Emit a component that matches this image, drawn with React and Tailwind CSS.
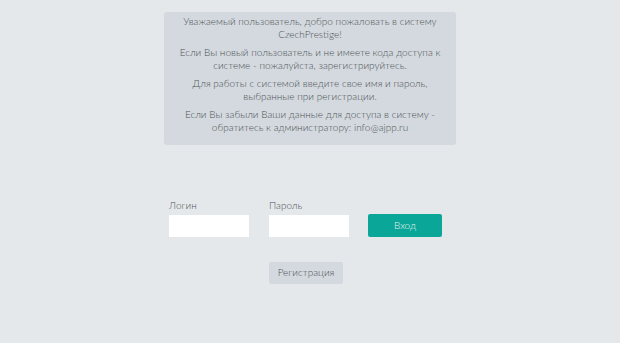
import React from 'react';

const App = () => {
  return (
    <div className="min-h-[343px] w-full bg-[#e4e8eb] pt-3" style={{ fontFamily: 'Lato, "Open Sans", sans-serif' }}>
      <div className="mx-auto w-[292px] rounded-[3px] bg-[#d3d9de] px-3 pt-[3px] pb-[6px] text-center text-[10px] font-light leading-[13px] text-[#4f5458]">
        <p className="mb-[5px]">Уважаемый пользователь, добро пожаловать в систему CzechPrestige!</p>
        <p className="mb-[5px]">Если Вы новый пользователь и не имеете кода доступа к системе - пожалуйста, зарегистрируйтесь.</p>
        <p className="mb-[5px]">Для работы с системой введите свое имя и пароль, выбранные при регистрации.</p>
        <p className="mb-[5px]">Если Вы забыли Ваши данные для доступа в систему - обратитесь к администратору: info@ajpp.ru</p>
      </div>

      <div className="mx-auto mt-[54px] w-[292px] pl-[5px]">
        <div className="flex items-end">
          <div className="w-[100px]">
            <label className="block text-[10px] font-light leading-[13px] text-[#4f5458]">Логин</label>
            <input className="mt-[3px] block h-[22px] w-[80px] bg-white outline-none" />
          </div>
          <div className="w-[99px]">
            <label className="block text-[10px] font-light leading-[13px] text-[#4f5458]">Пароль</label>
            <input type="password" className="mt-[3px] block h-[22px] w-[80px] bg-white outline-none" />
          </div>
          <button className="mb-0 h-[23px] w-[74px] rounded-[2px] bg-[#0aa698] text-[10px] font-light text-[#e2f5f2]">Вход</button>
        </div>
        <div className="mt-[21px] pl-[100px]">
          <button className="h-[22px] w-[74px] rounded-[2px] bg-[#d3d9de] text-[10px] font-light text-[#4f5458]">Регистрация</button>
        </div>
      </div>
    </div>
  );
};

export default App;
